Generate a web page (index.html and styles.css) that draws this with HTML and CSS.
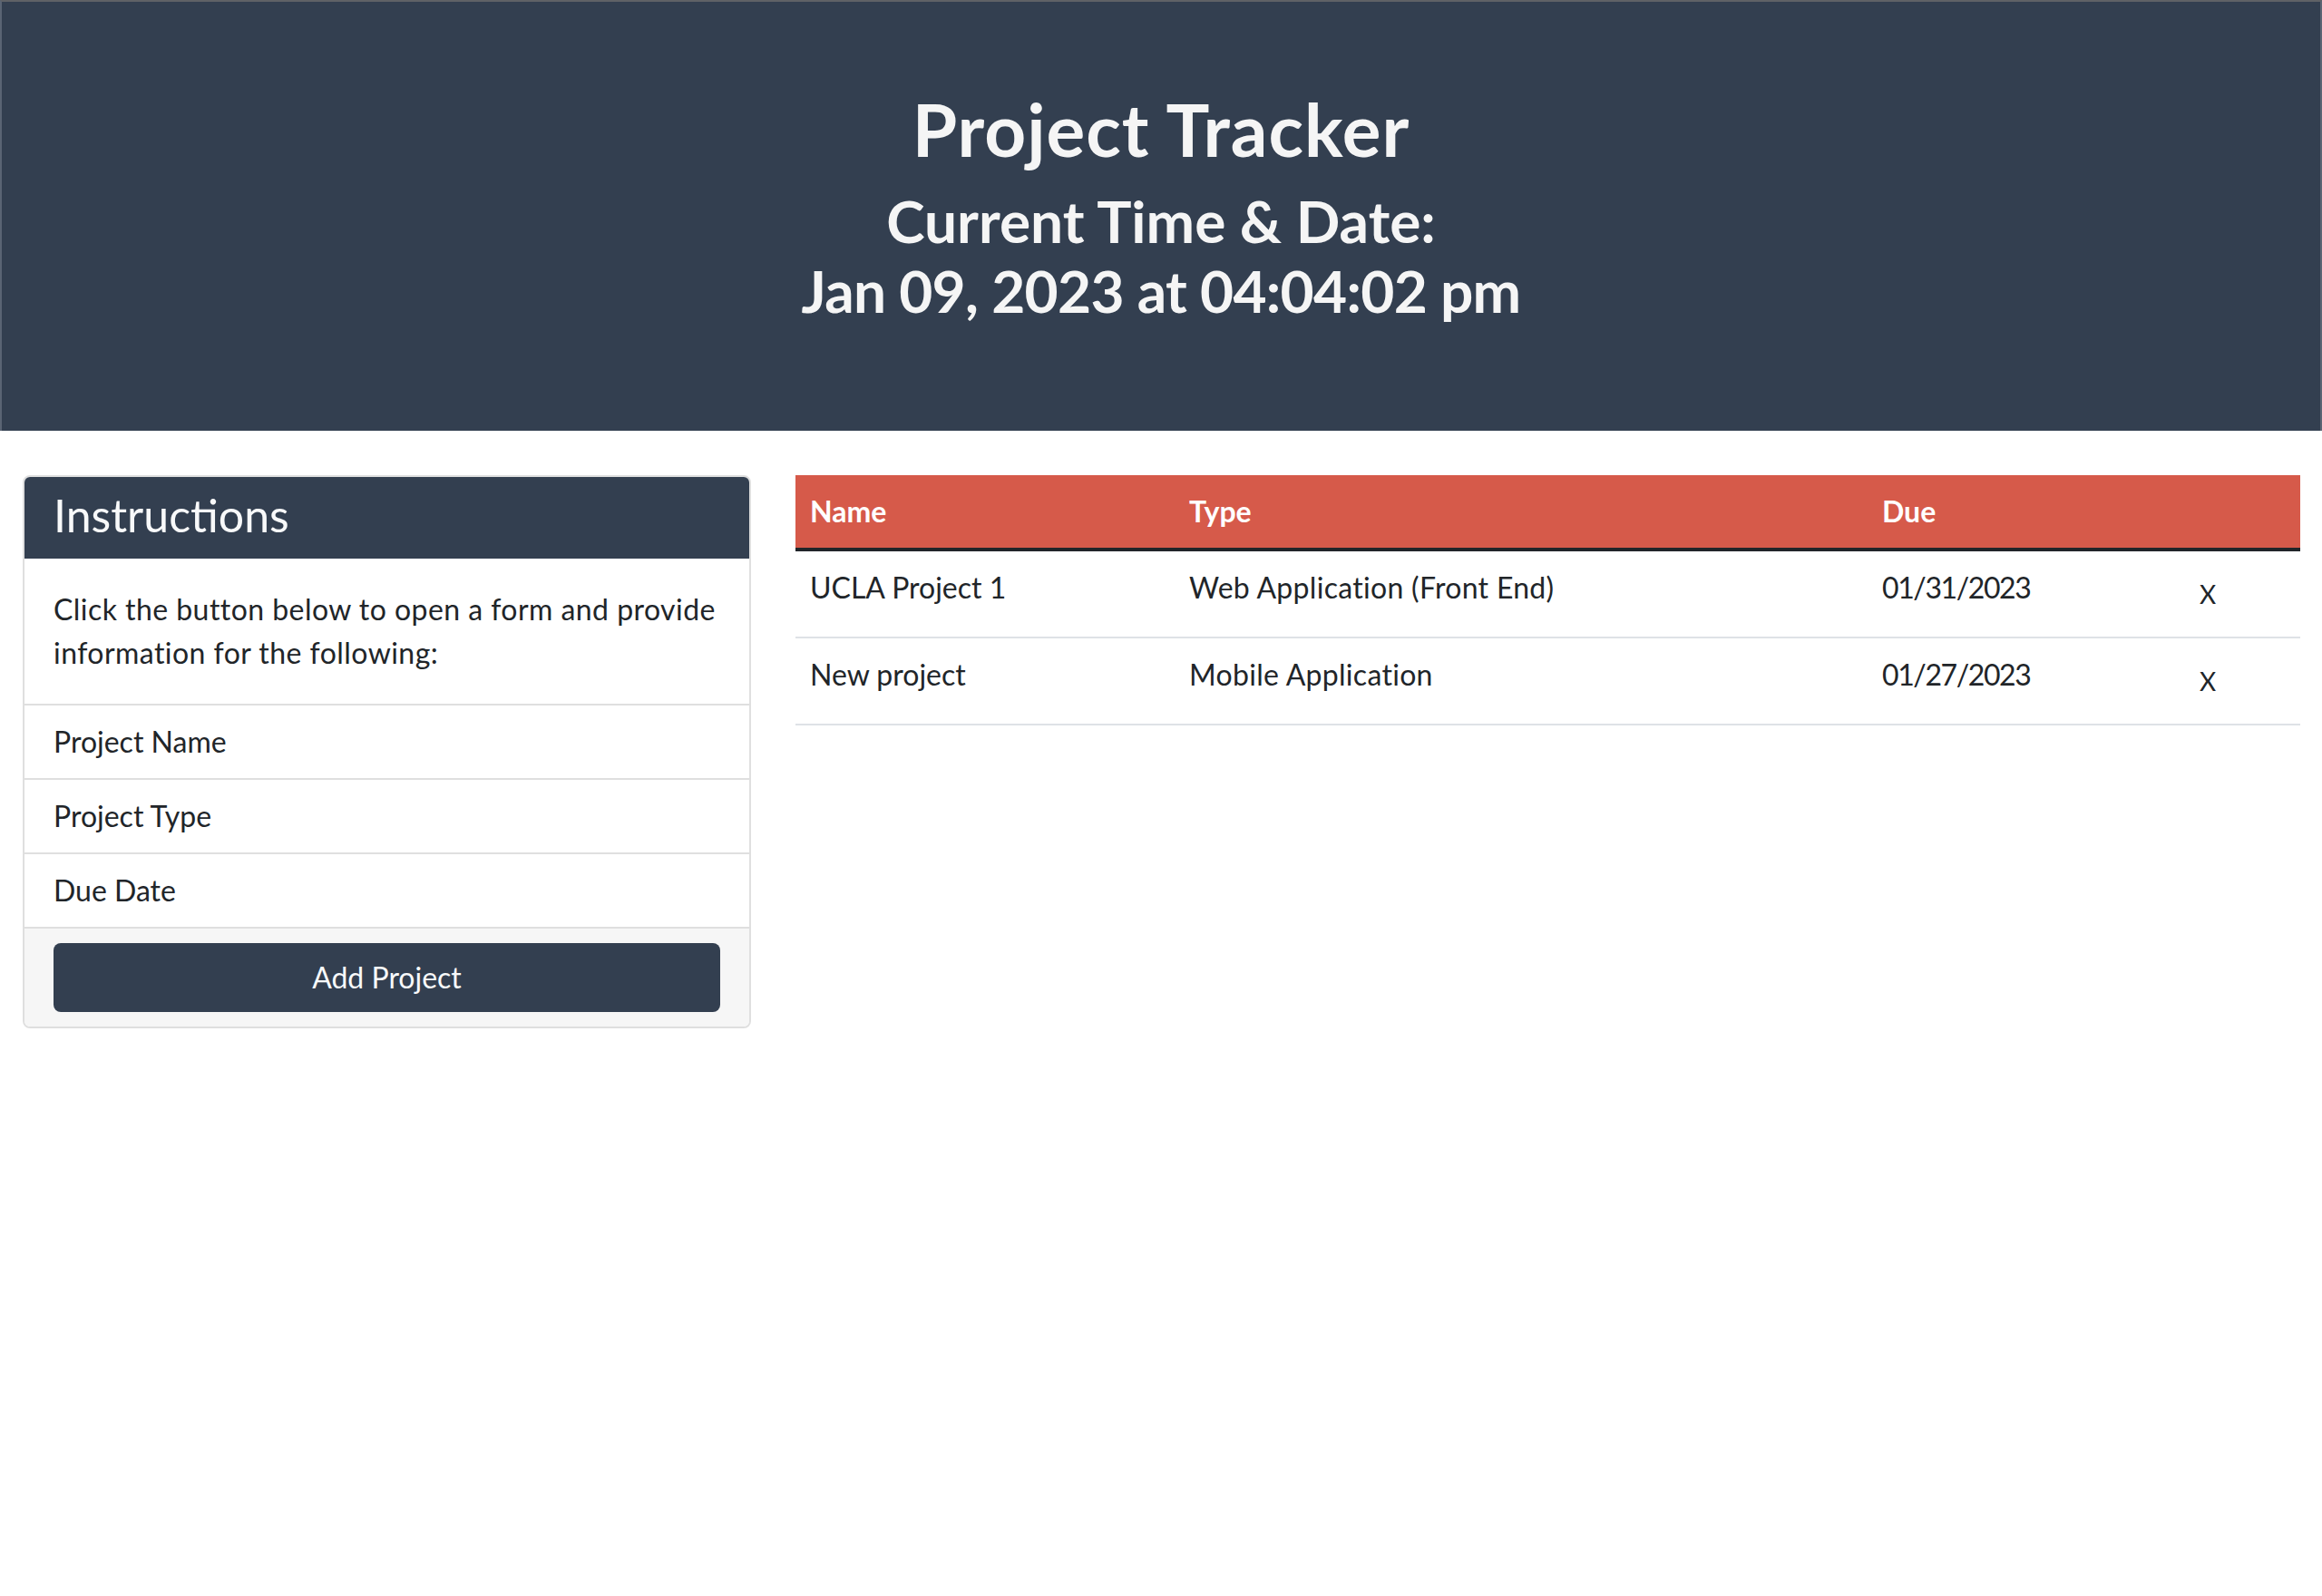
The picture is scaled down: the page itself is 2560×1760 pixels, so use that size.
FILE: index.html
```html
<!DOCTYPE html>
<html lang="en">
<head>
<meta charset="utf-8">
<title>Project Tracker</title>
<link rel="stylesheet" href="styles.css">
</head>
<body>
<header class="hero">
  <h1 class="hero-title">Project Tracker</h1>
  <h2 class="hero-time">Current Time &amp; Date:<br><span class="hero-date">Jan 09, 2023 at 04:04:02 pm</span></h2>
</header>
<main class="main">
  <section class="card">
    <div class="card-header"><h3 class="card-title">Instructions</h3></div>
    <div class="card-body"><p>Click the button below to open a form and provide information for the following:</p></div>
    <ul class="list">
      <li>Project Name</li>
      <li>Project Type</li>
      <li>Due Date</li>
    </ul>
    <div class="card-footer"><button class="btn-add" type="button">Add Project</button></div>
  </section>
  <section class="projects">
    <table class="table">
      <colgroup>
        <col class="col-name">
        <col class="col-type">
        <col class="col-due">
        <col class="col-del">
      </colgroup>
      <thead>
        <tr><th>Name</th><th>Type</th><th>Due</th><th></th></tr>
      </thead>
      <tbody>
        <tr><td>UCLA Project 1</td><td class="type">Web Application (Front End)</td><td class="due">01/31/2023</td><td><button class="btn-del" type="button">X</button></td></tr>
        <tr><td>New project</td><td class="type">Mobile Application</td><td class="due">01/27/2023</td><td><button class="btn-del" type="button">X</button></td></tr>
      </tbody>
    </table>
  </section>
</main>
</body>
</html>
```
FILE: styles.css
```css
* { box-sizing: border-box; }
html, body { margin: 0; }
body {
  font-family: Lato, "Noto Sans", sans-serif;
  font-size: 32px;
  line-height: 1.5;
  color: #212529;
  background: #fff;
}
.hero {
  height: 475px;
  background: #333f50;
  border-top: 2px solid #5f6166;
  border-left: 2px solid #5a6473;
  border-right: 2px solid #5a6473;
  color: #f5f5f5;
  text-align: center;
  padding-top: 92px;
}
.hero-title {
  margin: 0 0 16px;
  font-size: 80px;
  line-height: 1.2;
  font-weight: 700;
  letter-spacing: 1px;
}
.hero-time {
  margin: 0;
  font-size: 64px;
  line-height: 1.2;
  font-weight: 700;
}
.hero-date { letter-spacing: -0.7px; }
.main {
  display: grid;
  grid-template-columns: 803px 1fr;
  column-gap: 49px;
  padding: 49px 24px 0 25px;
  align-items: start;
}
.card {
  border: 2px solid #dfdfdf;
  border-radius: 8px;
  overflow: hidden;
}
.card-header {
  background: #333f50;
  color: #f8f9fa;
  padding: 16px 32px;
}
.card-title {
  margin: 0;
  font-size: 50px;
  line-height: 1.15;
  font-weight: 400;
  position: relative;
  top: -2px;
}
.card-body { padding: 32px; }
.card-body p { margin: 0; letter-spacing: 0.45px; }
.list { list-style: none; margin: 0; padding: 0; }
.list li { border-top: 2px solid #dfdfdf; padding: 16px 32px; }
.card-footer {
  border-top: 2px solid #dfdfdf;
  background: #f6f6f6;
  padding: 16px 32px;
}
.btn-add {
  display: block;
  width: 100%;
  background: #333f50;
  color: #f8f9fa;
  border: 0;
  border-radius: 8px;
  font: inherit;
  line-height: 48px;
  padding: 14px;
}
.table { width: 100%; border-collapse: collapse; }
.col-name { width: 418px; }
.col-type { width: 764px; }
.col-due { width: 338px; }
.table th {
  background: #d65a4a;
  color: #fff;
  text-align: left;
  font-weight: 700;
  padding: 16px;
  border-bottom: 4px solid #212529;
}
.table td {
  padding: 16px;
  border-bottom: 2px solid #dee2e6;
  vertical-align: top;
}
.table td.type { letter-spacing: 0.3px; }
.table td.due { letter-spacing: -1.4px; }
.btn-del {
  font: inherit;
  font-size: 28px;
  line-height: 48px;
  background: none;
  border: 0;
  padding: 7px 12px;
  color: #212529;
  display: block;
}
```
